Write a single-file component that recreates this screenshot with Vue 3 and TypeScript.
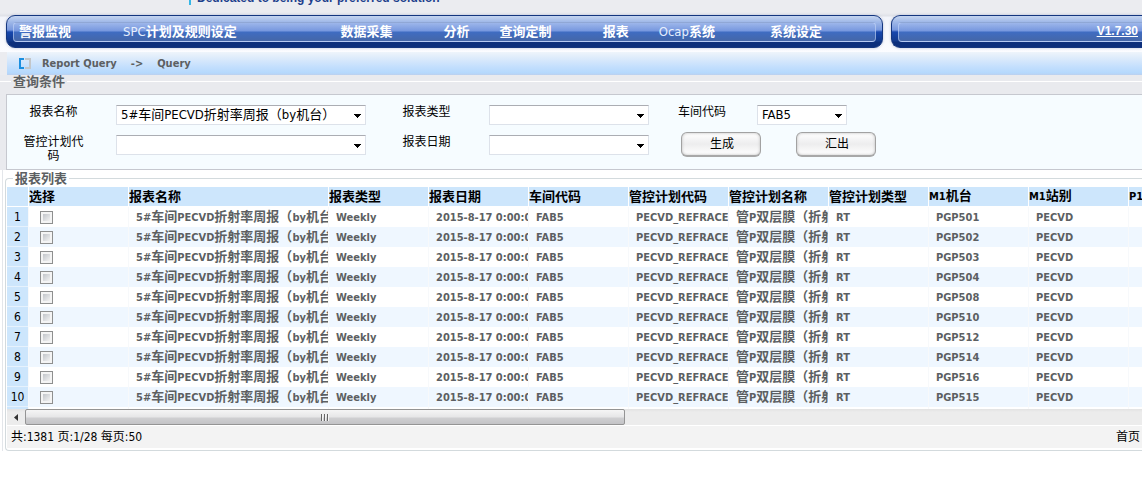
<script setup lang="ts">
import { computed, ref } from 'vue'

interface Run {
  text: string
  latin: boolean
}

interface Report {
  machine: string
  checked: boolean
}

const menu: string[] = ['警报监视', 'SPC计划及规则设定', '数据采集', '分析', '查询定制', '报表', 'Ocap系统', '系统设定']

const columns: string[] = [
  '选择', '报表名称', '报表类型', '报表日期', '车间代码', '管控计划代码',
  '管控计划名称', '管控计划类型', 'M1机台', 'M1站别', 'P1',
]

const reports = ref<Report[]>(
  ['PGP501', 'PGP502', 'PGP503', 'PGP504', 'PGP508', 'PGP510', 'PGP512', 'PGP514', 'PGP516', 'PGP515'].map(
    (machine) => ({ machine, checked: false }),
  ),
)

const name = ref('5#车间PECVD折射率周报（by机台）')
const workshop = ref('FAB5')

// Latin runs are set one step smaller than the Chinese text beside them.
function runs(text: string): Run[] {
  return (text.match(/[\x20-\x7e]+|[^\x20-\x7e]+/g) ?? []).map((part) => ({
    text: part,
    latin: /^[\x20-\x7e]/.test(part),
  }))
}

const rows = computed(() =>
  reports.value.map((report) => ({
    report,
    cells: [
      '5#车间PECVD折射率周报（by机台', 'Weekly', '2015-8-17 0:00:00', 'FAB5',
      'PECVD_REFRACET', '管P双层膜（折射', 'RT', report.machine, 'PECVD', '',
    ].map(runs),
  })),
)
</script>

<template>
  <div class="page">
    <header class="top">
      <p class="tagline"><span>Dedicated to being your preferred solution</span></p>
      <div class="bars">
        <nav class="bar">
          <div class="inner menu">
            <a v-for="item in menu" :key="item" href="#"><span
              v-for="(run, i) in runs(item)" :key="i" :class="{ latin: run.latin }">{{ run.text }}</span></a>
          </div>
        </nav>
        <div class="bar open">
          <div class="inner version"><a href="#">V1.7.30</a></div>
        </div>
      </div>
      <div class="crumbs">
        <svg width="13" height="11" viewBox="0 0 13 11" fill="none" stroke-width="2" aria-hidden="true">
          <path d="M5 1H1v9h4" stroke="#1b8fe0" />
          <path d="M6 1h5v9H6" stroke="#c3c6c9" />
        </svg>
        <span>Report Query</span><span class="arrow">-&gt;</span><span>Query</span>
      </div>
    </header>

    <fieldset class="group query">
      <legend>查询条件</legend>
      <form class="form" @submit.prevent>
        <label for="name">报表名称</label>
        <select id="name" v-model="name"><option>5#车间PECVD折射率周报（by机台）</option></select>
        <label for="type">报表类型</label>
        <select id="type"><option></option></select>
        <label for="shop">车间代码</label>
        <select id="shop" v-model="workshop"><option>FAB5</option></select>
        <label for="plan">管控计划代码</label>
        <select id="plan"><option></option></select>
        <label for="date">报表日期</label>
        <select id="date"><option></option></select>
        <div class="actions">
          <button type="submit">生成</button>
          <button type="button">汇出</button>
        </div>
      </form>
    </fieldset>

    <fieldset class="group list">
      <legend>报表列表</legend>
      <div class="viewport">
        <table>
          <colgroup>
            <col class="c-num"><col><col class="c-name"><col v-for="n in 9" :key="n">
          </colgroup>
          <thead>
            <tr>
              <th></th>
              <th v-for="title in columns" :key="title"><span
                v-for="(run, i) in runs(title)" :key="i" :class="{ latin: run.latin }">{{ run.text }}</span></th>
            </tr>
          </thead>
          <tbody>
            <tr v-for="(row, r) in rows" :key="r">
              <th scope="row">{{ r + 1 }}</th>
              <td class="pick"><input v-model="row.report.checked" type="checkbox" :aria-label="row.report.machine"></td>
              <td v-for="(cell, c) in row.cells" :key="c"><span
                v-for="(run, i) in cell" :key="i" :class="{ latin: run.latin }">{{ run.text }}</span></td>
            </tr>
            <tr><th></th><td v-for="n in 11" :key="n"></td></tr>
          </tbody>
        </table>
      </div>
      <div class="scroll">
        <button type="button" class="step" aria-label="◂">
          <svg width="4" height="7" viewBox="0 0 4 7" aria-hidden="true"><path d="M4 0v7L0 3.5z" fill="#333" /></svg>
        </button>
        <div class="thumb"><i></i><i></i><i></i></div>
      </div>
      <footer class="pager">
        <span>共:1381 页:1/28 每页:50</span>
        <a href="#">首页</a>
      </footer>
    </fieldset>
  </div>
</template>

<style>
body {
  background: #fff;
}
</style>

<style scoped>
.page {
  font: 12px/14px "DejaVu Sans Condensed", "Noto Sans CJK SC", sans-serif;
  color: #000;
  overflow: hidden;
  background: linear-gradient(90deg, #fff 0 2px, #e3e6ea 2px 3px, #fff 3px);
}
.top {
  background: #ebecf0;
}
.tagline {
  margin: 0;
  height: 13px;
  padding-left: 189px;
  overflow: hidden;
  font: bold 12px/14px "Liberation Sans", sans-serif;
  color: #1d3f8c;
  display: flex;
  align-items: flex-start;
}
.tagline span {
  margin-top: -9px;
  padding-left: 6px;
  border-left: 2px solid #35b6e6;
}
.bars {
  display: grid;
  grid-template-columns: minmax(0, 877fr) minmax(0, 251fr);
  gap: 8px;
  padding: 2px 0 4px 6px;
  background: linear-gradient(#ebecf0, #dfe1e8 3px, #f2f4fa 4px, #fbfcff);
}
.bar {
  box-sizing: border-box;
  height: 33px;
  padding: 6px 6px;
  border: 1px solid #14367f;
  border-radius: 9px;
  background: linear-gradient(#c5d5f0, #9fb8e8 6px, #7898de 14px, #1747ae 16px, #123a8c 25px, #0c2f7c 26px);
  box-shadow: 0 0 3px #b9c1d6;
}
.bar.open {
  border-right: 0;
  border-radius: 9px 0 0 9px;
  padding-right: 0;
}
.inner {
  box-sizing: border-box;
  height: 20px;
  border: 1px solid rgba(205, 220, 250, 0.55);
  border-radius: 4px;
  background: linear-gradient(#9db6ea, #7697de 8px, #3f6cc2 9px, #4567a8);
  font-size: 13px;
  line-height: 17px;
  font-weight: bold;
  color: #fff;
}
.inner a {
  color: inherit;
  text-decoration: none;
  white-space: nowrap;
}
.menu {
  display: grid;
  grid-template-columns: 104fr 217fr 103fr 56fr 103fr 56fr 111fr 105fr;
  padding-left: 5px;
}
.open .inner {
  border-right: 0;
  border-radius: 4px 0 0 4px;
}
.version {
  text-align: right;
  padding-right: 4px;
  font-family: "Liberation Sans", sans-serif;
  font-size: 12px;
}
.inner.version a {
  text-decoration: underline;
}
.crumbs {
  display: flex;
  align-items: center;
  height: 23px;
  margin-left: 7px;
  padding-left: 12px;
  font-weight: bold;
  font-size: 11px;
  color: #5c5f62;
  background: linear-gradient(#eef4fb, #ddebfb 6px, #c6e0fd 14px, #b4d8fd 21px, #bccfee);
}
.crumbs svg {
  margin-right: 10px;
}
.arrow {
  margin: 0 14px;
}
.latin {
  font-size: 11px;
}
.menu .latin {
  font-size: 13px;
  font-weight: normal;
  color: #e6effd;
}
.group {
  margin: 0 0 0 5px;
  padding: 0;
  min-width: 0;
  border: 1px solid #d3dadd;
  border-right: 0;
}
.group legend {
  margin-left: 6px;
  padding: 0 2px;
  font-size: 13px;
  line-height: 13px;
  font-weight: bold;
  color: #5c5f62;
}
.query {
  margin-left: 0;
  padding-left: 6px;
  border-width: 1px 0 0;
  border-color: #fff;
  background: #e9eaee;
  box-shadow: 0 -6px #e9eaee;
}
.query legend {
  margin-left: 5px;
}
.form {
  display: grid;
  grid-template-columns: 77px 250px 77px 160px 62px 90px;
  grid-auto-rows: 30px;
  column-gap: 23px;
  align-items: start;
  box-sizing: border-box;
  margin-top: 6px;
  padding: 7px 0 7px 9px;
  min-height: 76px;
  border: 1px solid #c6c8cf;
  border-right: 0;
  background: #f6fcff;
}
.form label {
  padding: 3px 8px 0 6px;
  text-align: center;
}
.form select {
  appearance: none;
  box-sizing: border-box;
  width: 100%;
  height: 20px;
  margin: 3px 0 0;
  padding: 0 20px 0 4px;
  border: 1px solid #dde2ea;
  border-top-color: #abadb3;
  border-radius: 0;
  color: #000;
  font: inherit;
  font-size: 13px;
  background:
    linear-gradient(#000, #000) no-repeat right 4px top 8px / 7px 1px,
    linear-gradient(#000, #000) no-repeat right 5px top 9px / 5px 1px,
    linear-gradient(#000, #000) no-repeat right 6px top 10px / 3px 1px,
    linear-gradient(#000, #000) no-repeat right 7px top 11px / 1px 1px,
    #fff;
}
.actions {
  grid-column: 5 / span 2;
  display: flex;
  gap: 35px;
  padding-left: 9px;
}
.actions button {
  flex: none;
  width: 80px;
  height: 25px;
  padding: 0 0 0 2px;
  border: 1px solid #a2a2a2;
  border-bottom: 2px solid #a8a8a8;
  border-radius: 6px;
  background: linear-gradient(#fff, #ededee 50%, #fff);
  box-shadow: inset 0 0 3px #bbb;
  color: #000;
  font: inherit;
}
.list {
  margin-top: 2px;
  padding: 2px 0 2px 1px;
  border-radius: 4px 0 0 4px;
}
.viewport {
  height: 222px;
  overflow: hidden;
}
table {
  table-layout: fixed;
  width: 1221px;
  border-collapse: separate;
  border-spacing: 0;
}
col {
  width: 100px;
}
.c-num {
  width: 21px;
}
.c-name {
  width: 200px;
}
th,
td {
  box-sizing: border-box;
  height: 20px;
  padding: 0;
  overflow: hidden;
  white-space: nowrap;
  text-align: left;
  line-height: 18px;
  font-size: 13px;
  font-weight: bold;
}
th {
  background: #cde6fc;
}
thead th {
  border: 0 solid #fff;
  border-width: 0 0 1px 1px;
}
thead th:first-child {
  border-left: 0;
}
tbody th {
  font-size: 12px;
  font-weight: normal;
  text-align: center;
  border-bottom: 1px solid #e6f2fd;
}
td {
  padding-left: 7px;
  color: #5c5f62;
  border-left: 1px solid #f7f9fb;
}
tbody tr:nth-child(even) td {
  background: #eff7ff;
}
.pick {
  padding-left: 11px;
  line-height: 0;
}
.pick input {
  appearance: none;
  box-sizing: border-box;
  width: 13px;
  height: 13px;
  margin: 0;
  border: 1px solid #8e8f8f;
  background: linear-gradient(135deg, #c2c5ca, #f2f2f2) content-box, #f4f4f4;
  padding: 2px;
}
.pick input:checked {
  background: #4b6d99 content-box, #fff;
}
.scroll {
  display: flex;
  align-items: stretch;
  height: 16px;
  background: linear-gradient(#e2e2e2, #ececec 3px);
}
.step {
  width: 18px;
  padding: 0;
  border: 0;
  background: none;
  line-height: 0;
}
.thumb {
  box-sizing: border-box;
  display: flex;
  align-items: center;
  justify-content: center;
  gap: 1px;
  width: 600px;
  border: 1px solid #949494;
  border-radius: 2px;
  background: linear-gradient(#f5f5f5, #e6e6e7 7px, #cfcfd1 8px, #c3c3c6);
}
.thumb i {
  width: 1px;
  height: 7px;
  border-right: 1px solid #f4f4f4;
  background: #666;
}
.pager {
  display: flex;
  justify-content: space-between;
  margin-top: 1px;
  padding: 4px 2px 4px 4px;
  background: #f3f3f3;
}
.pager a {
  color: inherit;
  text-decoration: none;
}
</style>
